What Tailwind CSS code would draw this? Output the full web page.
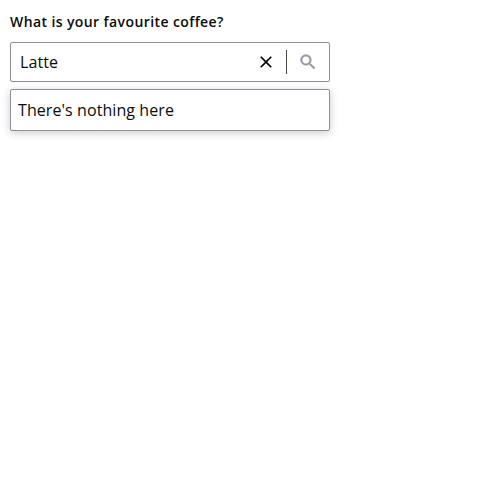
<!DOCTYPE html>
<html lang="en">
<head>
<meta charset="utf-8">
<title>Coffee search</title>
<script src="https://cdn.jsdelivr.net/npm/@tailwindcss/browser@4"></script>
</head>
<body class="bg-white font-['Open_Sans',sans-serif] text-[#0b0c0c] antialiased">
<div class="w-[340px] p-2.5">
  <label for="q" class="block h-8 text-sm leading-6 font-semibold tracking-[0.4px]">What is your favourite coffee?</label>
  <div class="flex h-10 items-center rounded-[2px] border border-[#8a8f9b] bg-white">
    <input id="q" value="Latte" class="h-full min-w-0 flex-1 pl-[9px] text-base leading-6 tracking-[0.08px] outline-none">
    <button class="mr-2.5 flex size-5 items-center justify-center" aria-label="Clear">
      <svg class="size-5" viewBox="0 0 24 24" fill="#000"><path d="M19 6.41 17.59 5 12 10.59 6.41 5 5 6.41 10.59 12 5 17.59 6.41 19 12 13.41 17.59 19 19 17.59 13.41 12z"/></svg>
    </button>
    <span class="h-6 w-px bg-[#41464d]"></span>
    <svg class="mx-[11px] size-5" viewBox="0 0 24 24" fill="#9599a3" stroke="#9599a3" stroke-width="0.5"><path d="M15.5 14h-.79l-.28-.27A6.471 6.471 0 0 0 16 9.5 6.5 6.5 0 1 0 9.5 16c1.61 0 3.09-.59 4.23-1.57l.27.28v.79l5 4.99L20.49 19l-4.99-5zm-6 0C7.01 14 5 11.99 5 9.5S7.01 5 9.5 5 14 7.01 14 9.5 11.99 14 9.5 14z"/></svg>
  </div>
  <div class="mt-[7px] flex h-[42px] items-center rounded-[2px] border border-[#8a8f9b] bg-white px-[7px] text-base leading-6 tracking-[0.08px] shadow-[0_2px_10px_rgba(0,0,0,0.2)]">There's nothing here</div>
</div>
</body>
</html>
